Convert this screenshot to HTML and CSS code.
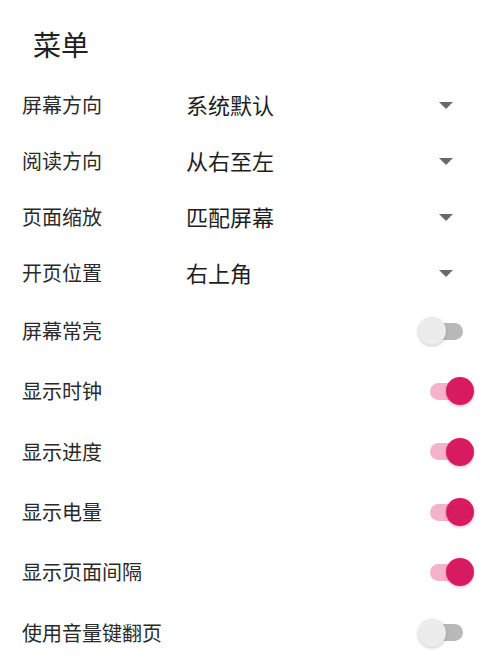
FILE: index.html
```html
<!DOCTYPE html>
<html lang="zh-CN">
<head>
<meta charset="utf-8">
<title>菜单</title>
<link rel="stylesheet" href="styles.css">
</head>
<body>
<div class="menu">
  <h1 class="title">菜单</h1>

  <div class="row select-row">
    <span class="label">屏幕方向</span>
    <span class="value">系统默认</span>
    <span class="arrow"></span>
  </div>
  <div class="row select-row">
    <span class="label">阅读方向</span>
    <span class="value">从右至左</span>
    <span class="arrow"></span>
  </div>
  <div class="row select-row">
    <span class="label">页面缩放</span>
    <span class="value">匹配屏幕</span>
    <span class="arrow"></span>
  </div>
  <div class="row select-row">
    <span class="label">开页位置</span>
    <span class="value">右上角</span>
    <span class="arrow"></span>
  </div>

  <div class="row switch-row">
    <span class="label">屏幕常亮</span>
    <span class="switch"><span class="track"></span><span class="thumb"></span></span>
  </div>
  <div class="row switch-row">
    <span class="label">显示时钟</span>
    <span class="switch on"><span class="track"></span><span class="thumb"></span></span>
  </div>
  <div class="row switch-row">
    <span class="label">显示进度</span>
    <span class="switch on"><span class="track"></span><span class="thumb"></span></span>
  </div>
  <div class="row switch-row">
    <span class="label">显示电量</span>
    <span class="switch on"><span class="track"></span><span class="thumb"></span></span>
  </div>
  <div class="row switch-row">
    <span class="label">显示页面间隔</span>
    <span class="switch on"><span class="track"></span><span class="thumb"></span></span>
  </div>
  <div class="row switch-row">
    <span class="label">使用音量键翻页</span>
    <span class="switch"><span class="track"></span><span class="thumb"></span></span>
  </div>
</div>
</body>
</html>
```

FILE: styles.css
```css
html, body {
  margin: 0;
  padding: 0;
  background: #ffffff;
}

body {
  font-family: "Noto Sans CJK SC", "Noto Sans", sans-serif;
  color: #222222;
  width: 500px;
  height: 664px;
  overflow: hidden;
}

.menu {
  display: flex;
  flex-direction: column;
  padding-left: 22px;
}

.title {
  margin: 0;
  height: 77px;
  display: flex;
  align-items: center;
  padding-left: 11px;
  padding-top: 10px;
  box-sizing: border-box;
  font-size: 28px;
  font-weight: 400;
  color: #212121;
}

.row {
  display: flex;
  align-items: center;
}

.select-row {
  height: 56px;
}

.switch-row {
  height: 60.3px;
}

.label {
  font-size: 20px;
  color: #2a2a2a;
  line-height: 1;
}

.select-row .label {
  width: 164px;
  flex: none;
}

.value {
  flex: 1;
  font-size: 22px;
  color: #1e1e1e;
  line-height: 1;
  margin-bottom: 3px;
}

.arrow {
  width: 0;
  height: 0;
  border-left: 7px solid transparent;
  border-right: 7px solid transparent;
  border-top: 7px solid #6a6a6a;
  margin-right: 47px;
  margin-top: 1px;
}

.switch-row .label {
  flex: 1;
}

.switch {
  position: relative;
  width: 56px;
  height: 28px;
  margin-right: 26px;
  flex: none;
}

.switch .track {
  position: absolute;
  left: 12px;
  top: 5.5px;
  width: 33px;
  height: 17px;
  border-radius: 9px;
  background: #b9b9b9;
}

.switch .thumb {
  position: absolute;
  left: 0;
  top: 0;
  width: 28px;
  height: 28px;
  border-radius: 50%;
  background: #ececec;
  box-shadow: 0 1px 3px rgba(0, 0, 0, 0.22);
}

.switch.on .track {
  background: #f4b3ca;
}

.switch.on .thumb {
  left: 28px;
  background: #d81b60;
  box-shadow: 0 1px 3px rgba(216, 27, 96, 0.35);
}
```
